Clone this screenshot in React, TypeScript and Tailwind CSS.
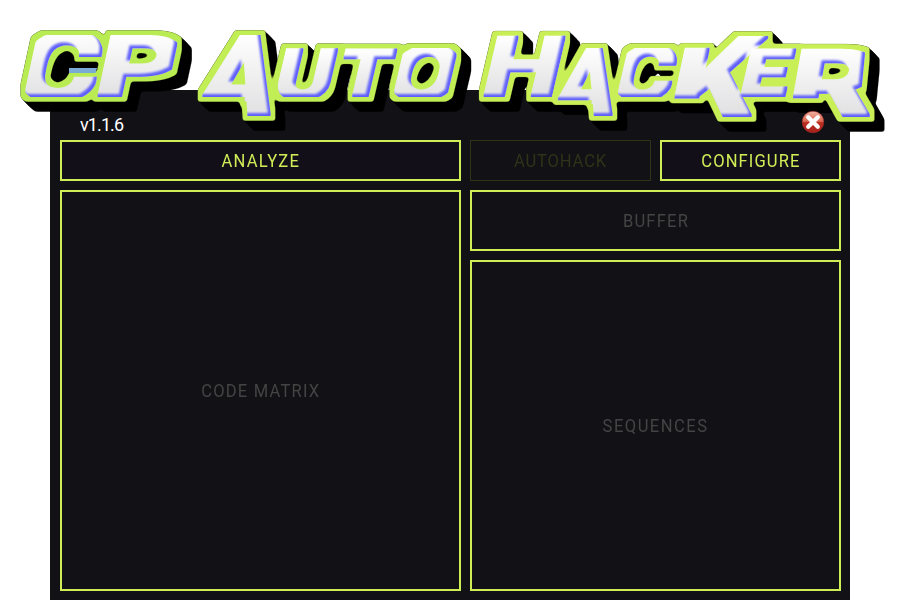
import React from "react";

type Point = [number, number];
type Glyph = {
  ch: string;
  bl: Point;
  br: Point;
  tl: Point;
  trim?: [number, number, number, number];
  mask?: Point[];
};
type Word = { id: string; lime: string; hollow?: boolean; glyphs: Glyph[] };

// Masks in box units (0..1 from the bottom left): they shorten the left foot
// of a letter whose right leg drops below the baseline.
const A_MASK: Point[] = [[0, 0.25], [0.64, 0.25], [0.66, 0], [1, 0], [1, 1], [0, 1]];
const K_MASK: Point[] = [[0, 0.23], [0.48, 0.23], [0.48, 0], [1, 0], [1, 1], [0.5, 1], [0.5, 0.84], [0, 0.84]];
const R_MASK: Point[] = [[0, 0.28], [0.5, 0.28], [0.5, 0], [1, 0], [1, 0.1], [0.83, 0.42], [0.79, 1], [0, 1]];

// Each letter is fitted to a slanted box: bottom-left, bottom-right, top-left.
// `trim` shaves a share of the glyph off its left, top, right and bottom sides,
// which gives the round letters flat sides.
const WORDS: Word[] = [
  {
    id: "cp",
    lime: "#b9ec52",
    hollow: true,
    glyphs: [
      { ch: "C", bl: [25, 96], br: [92, 96], tl: [38, 36], trim: [0.11, 0.08, 0.03, 0.08] },
      { ch: "P", bl: [98, 96], br: [165, 96], tl: [111, 36], trim: [0, 0, 0.1, 0] },
    ],
  },
  {
    id: "auto",
    lime: "#c0ee54",
    glyphs: [
      { ch: "A", bl: [190, 116], br: [270, 116], tl: [210, 36], mask: A_MASK },
      { ch: "U", bl: [276, 96], br: [327, 96], tl: [287, 49], trim: [0, 0, 0, 0.08] },
      { ch: "T", bl: [335, 96], br: [386, 96], tl: [346, 49] },
      { ch: "O", bl: [394, 96], br: [446, 96], tl: [405, 49], trim: [0.11, 0.08, 0.11, 0.08] },
    ],
  },
  {
    id: "hacker",
    lime: "#c9ef57",
    glyphs: [
      { ch: "H", bl: [484, 96], br: [551, 96], tl: [498, 36] },
      { ch: "A", bl: [549, 116], br: [612, 116], tl: [563, 49], mask: A_MASK },
      { ch: "C", bl: [618, 96], br: [668, 96], tl: [629, 49], trim: [0.11, 0.08, 0.03, 0.08] },
      { ch: "K", bl: [671, 116], br: [751, 116], tl: [688, 36], mask: K_MASK },
      { ch: "E", bl: [741, 96], br: [785, 96], tl: [752, 49] },
      { ch: "R", bl: [790, 116], br: [869, 116], tl: [802, 49], mask: R_MASK },
    ],
  },
];

const LOGO_FONT = "900 100px Roboto, 'Liberation Sans', sans-serif";
const FULL: Point[] = [[0, 0], [1, 0], [1, 1], [0, 1]];

function fit(ctx: CanvasRenderingContext2D, g: Glyph) {
  const m = ctx.measureText(g.ch);
  const inkL = -m.actualBoundingBoxLeft;
  const inkW = m.actualBoundingBoxRight - inkL;
  const inkH = m.actualBoundingBoxAscent + m.actualBoundingBoxDescent;
  const [tl, tt, tr, tb] = g.trim ?? [0, 0, 0, 0];
  const left = inkL + inkW * tl;
  const top = -m.actualBoundingBoxAscent + inkH * tt;
  const w = inkW * (1 - tl - tr);
  const h = inkH * (1 - tt - tb);
  const base = top + h;
  const a = (g.br[0] - g.bl[0]) / w;
  const b = (g.br[1] - g.bl[1]) / w;
  const c = -(g.tl[0] - g.bl[0]) / h;
  const d = -(g.tl[1] - g.bl[1]) / h;
  const e = g.bl[0] - a * left - c * base;
  const f = g.bl[1] - b * left - d * base;
  const points = (g.mask ?? FULL).map(([u, v]) => `${left + u * w},${base - v * h}`).join(" ");
  return { points, matrix: `matrix(${a} ${b} ${c} ${d} ${e} ${f})` };
}

function LogoFilter({ id, lime, hollow }: { id: string; lime: string; hollow?: boolean }) {
  return (
    <filter id={id} filterUnits="userSpaceOnUse" x="0" y="0" width="900" height="150" colorInterpolationFilters="sRGB">
      <feMorphology in="SourceGraphic" operator="dilate" radius="1" result="face" />
      <feMorphology in="face" operator="dilate" radius="5" result="fat" />
      <feGaussianBlur in="fat" stdDeviation="1.6" result="soft" />
      <feComponentTransfer in="soft" result="edge">
        <feFuncA type="linear" slope="3.5" intercept="-1.5" />
      </feComponentTransfer>
      <feFlood floodColor={lime} />
      <feComposite in2="edge" operator="in" result="limeShape" />
      {/* extrusion towards the bottom right, doubled at each step */}
      <feOffset in="edge" dx="1" dy="1" result="o1" />
      <feMerge result="m1"><feMergeNode in="edge" /><feMergeNode in="o1" /></feMerge>
      <feOffset in="m1" dx="2" dy="2" result="o2" />
      <feMerge result="m2"><feMergeNode in="m1" /><feMergeNode in="o2" /></feMerge>
      <feOffset in="m2" dx="4" dy="4" result="o3" />
      <feMerge result="m3"><feMergeNode in="m2" /><feMergeNode in="o3" /></feMerge>
      <feOffset in="m3" dx="3" dy="3" result="o4" />
      <feMerge result="m4"><feMergeNode in="m3" /><feMergeNode in="o4" /></feMerge>
      <feFlood floodColor="#000" />
      <feComposite in2="m4" operator="in" result="depth" />
      {/* dark inside of the first letter */}
      <feFlood x="50" y="54" width="46" height="32" floodColor="#000" floodOpacity={hollow ? 1 : 0} result="hollow" />
      {/* blue bevel on the lower and right edges */}
      <feOffset in="face" dx="-3" dy="-3" result="shift" />
      <feGaussianBlur in="shift" stdDeviation="1.3" result="shiftSoft" />
      <feFlood floodColor="#6060fa" />
      <feComposite in2="face" operator="in" result="blueFace" />
      <feComposite in="blueFace" in2="shiftSoft" operator="out" result="bevel" />
      <feMerge>
        <feMergeNode in="depth" />
        <feMergeNode in="hollow" />
        <feMergeNode in="limeShape" />
        <feMergeNode in="face" />
        <feMergeNode in="bevel" />
      </feMerge>
    </filter>
  );
}

function Logo() {
  const ctx = document.createElement("canvas").getContext("2d")!;
  ctx.font = LOGO_FONT;
  return (
    <svg className="pointer-events-none absolute left-0 top-0" width="900" height="150" aria-label="CP Auto Hacker">
      <defs>
        <linearGradient id="faceFill" x1="0" y1="0.15" x2="0" y2="0.85">
          <stop offset="0" stopColor="#ffffff" />
          <stop offset="1" stopColor="#dddddf" />
        </linearGradient>
        {WORDS.map((w) => (
          <LogoFilter key={w.id} id={w.id} lime={w.lime} hollow={w.hollow} />
        ))}
      </defs>
      {WORDS.map((w) => (
        <g key={w.id} filter={`url(#${w.id})`} fill="url(#faceFill)">
          {w.glyphs.map((g, i) => {
            const box = fit(ctx, g);
            const clip = `${w.id}-${i}`;
            return (
              <g key={i} transform={box.matrix}>
                <clipPath id={clip}>
                  <polygon points={box.points} />
                </clipPath>
                <text clipPath={`url(#${clip})`} className="font-[Roboto,'Liberation_Sans',sans-serif] text-[100px] font-black">
                  {g.ch}
                </text>
              </g>
            );
          })}
        </g>
      ))}
      <path d="M69 68H97L95.500 73H69Z" fill="#7aaad6" />
    </svg>
  );
}

function Label({ children, tracking = "tracking-[1.3px]" }: { children: string; tracking?: string }) {
  return <span className={`inline-block scale-x-92 whitespace-nowrap text-[18px] leading-[20px] ${tracking}`}>{children}</span>;
}

function CloseIcon() {
  return (
    <svg width="24" height="24" viewBox="0 0 24 24">
      <defs>
        <linearGradient id="closeFill" x1="0" y1="0" x2="0" y2="1">
          <stop offset="0" stopColor="#f3b5a4" />
          <stop offset="0.48" stopColor="#d9644e" />
          <stop offset="0.52" stopColor="#bd3023" />
          <stop offset="1" stopColor="#a5201b" />
        </linearGradient>
      </defs>
      <circle cx="12" cy="12" r="10.8" fill="url(#closeFill)" stroke="#9c2a21" strokeWidth="0.6" />
      <path d="M7.2 7.2L16.8 16.8M16.8 7.2L7.2 16.8" stroke="#fff" strokeWidth="4.2" strokeLinecap="round" />
    </svg>
  );
}

export default function App() {
  return (
    <div className="relative h-[600px] w-[900px] overflow-hidden bg-white pt-[90px] font-[Roboto,'Liberation_Sans',sans-serif]">
      <main className="mx-auto flex h-[510px] w-[800px] flex-col bg-[#111116] pl-[10px] pr-[9px]">
        <header className="flex h-[50px] shrink-0 items-end justify-between pl-5 pr-[16px]">
          <span className="mb-[5px] text-[18px] leading-[20px] tracking-[-0.9px] text-white">v1.1.6</span>
          <button className="relative z-10 mb-[6px]" aria-label="Close"><CloseIcon /></button>
        </header>
        <div className="grid grid-cols-[401px_371px] gap-[9px]">
          <div className="flex flex-col gap-[9px]">
            <button className="flex h-[41px] items-center justify-center border-2 border-[#cfed57] bg-[#120f18] text-[#d0ed57]">
              <Label tracking="tracking-[1.4px]">ANALYZE</Label>
            </button>
            <section className="flex h-[401px] items-center justify-center border-2 border-[#cfed57] text-[#444444]">
              <Label>CODE MATRIX</Label>
            </section>
          </div>
          <div className="flex flex-col gap-[9px]">
            <div className="grid grid-cols-2 gap-[9px]">
              <button className="flex h-[41px] items-center justify-center border border-[#303318] text-[#303318]">
                <Label tracking="tracking-[0.9px]">AUTOHACK</Label>
              </button>
              <button className="flex h-[41px] items-center justify-center border-2 border-[#cfed57] bg-[#120f18] text-[#d0ed57]">
                <Label tracking="tracking-[1.2px]">CONFIGURE</Label>
              </button>
            </div>
            <section className="flex h-[61px] items-center justify-center border-2 border-[#cfed57] text-[#444444]">
              <Label>BUFFER</Label>
            </section>
            <section className="flex h-[331px] items-center justify-center border-2 border-[#cfed57] text-[#444444]">
              <Label tracking="tracking-[1.6px]">SEQUENCES</Label>
            </section>
          </div>
        </div>
      </main>
      <Logo />
    </div>
  );
}
